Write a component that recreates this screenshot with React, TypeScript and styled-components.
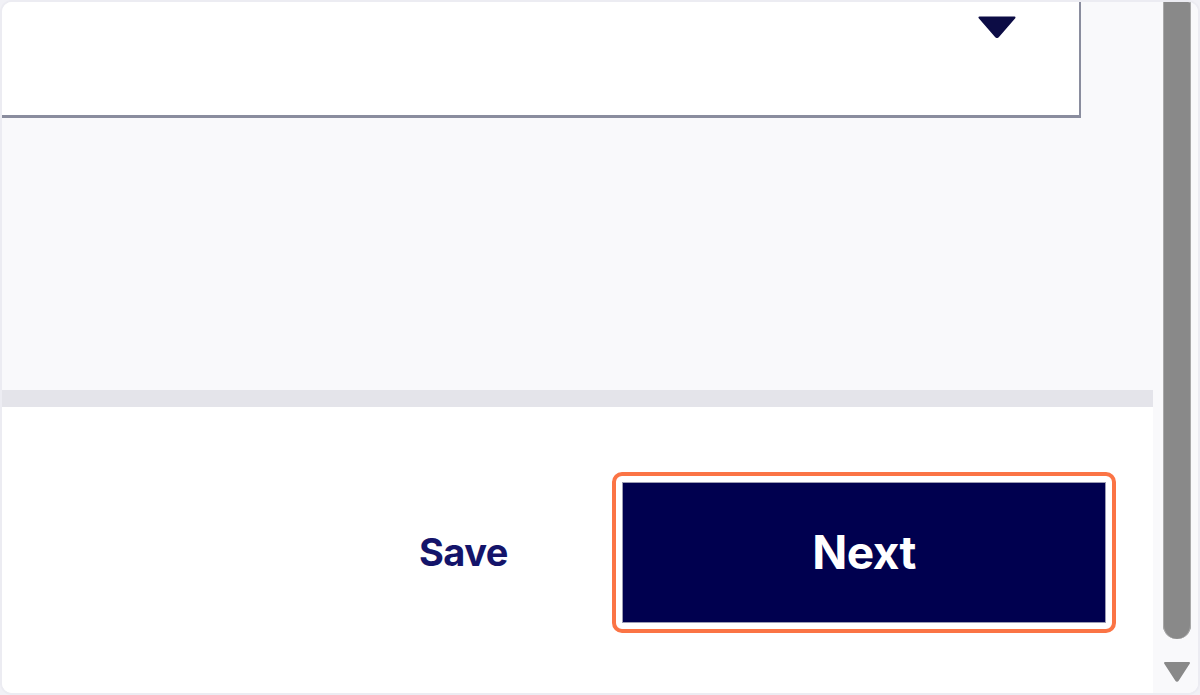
import React from "react";
import styled, { createGlobalStyle } from "styled-components";

const Global = createGlobalStyle`
  html, body { margin: 0; padding: 0; background: #f1f1f6; }
  body { font-family: "Inter", "Liberation Sans", sans-serif; }
  * { box-sizing: border-box; }
`;

const Frame = styled.div`
  width: 1200px;
  height: 695px;
  border: 2px solid #ececf2;
  border-radius: 12px;
  overflow: hidden;
  display: grid;
  grid-template-columns: 1fr 45px;
  background: #ffffff;
`;

const Main = styled.div`
  display: flex;
  flex-direction: column;
  min-width: 0;
`;

const Panel = styled.div`
  height: 388px;
  background: #f9f9fb;
  padding-right: 72px;
  display: flex;
  flex-direction: column;
`;

const Select = styled.div`
  height: 116px;
  background: #ffffff;
  border-right: 2px solid #8a8d9e;
  border-bottom: 3px solid #8a8d9e;
  display: flex;
  justify-content: flex-end;
  align-items: flex-start;
  padding: 14px 63px 0 0;
`;

const Divider = styled.div`
  height: 17px;
  background: #e4e4ea;
`;

const Footer = styled.div`
  flex: 1;
  background: #ffffff;
  display: flex;
  align-items: center;
  justify-content: flex-end;
  padding: 4px 37px 0 0;
`;

const SaveButton = styled.button`
  background: none;
  border: none;
  padding: 0;
  margin-right: 104px;
  font-family: "Inter", "Liberation Sans", sans-serif;
  font-weight: 700;
  font-size: 38px;
  letter-spacing: -0.5px;
  color: #14146a;
  cursor: pointer;
`;

const FocusRing = styled.div`
  border: 4px solid #fb7445;
  border-radius: 10px;
  padding: 6px;
  background: #ffffff;
`;

const NextButton = styled.button`
  width: 484px;
  height: 141px;
  background: #00004f;
  border: 1px solid #9c9cb3;
  color: #ffffff;
  font-family: "Inter", "Liberation Sans", sans-serif;
  font-weight: 700;
  font-size: 46px;
  letter-spacing: -0.5px;
  cursor: pointer;
  display: block;
`;

const Scrollbar = styled.div`
  background: #f9f9fb;
  display: flex;
  flex-direction: column;
  align-items: flex-start;
  padding-left: 10px;
`;

const Thumb = styled.div`
  width: 28px;
  height: 637px;
  background: #898989;
  border-radius: 0 0 14px 14px;
  box-shadow: inset 1px 0 0 #a9a9a9, inset -1px 0 0 #a9a9a9;
`;

const ArrowDown = styled.svg`
  margin-top: 22px;
  display: block;
`;

export default function App() {
  return (
    <>
      <Global />
      <Frame>
        <Main>
          <Panel>
            <Select>
              <svg width="38" height="22" viewBox="0 0 38 22">
                <path d="M1.5 1.5 L36.5 1.5 L20 20.5 Q19 21.5 18 20.5 Z" fill="#0c0c45" stroke="#0c0c45" strokeWidth="2" strokeLinejoin="round" />
              </svg>
            </Select>
          </Panel>
          <Divider />
          <Footer>
            <SaveButton>Save</SaveButton>
            <FocusRing>
              <NextButton>Next</NextButton>
            </FocusRing>
          </Footer>
        </Main>
        <Scrollbar>
          <Thumb />
          <ArrowDown width="28" height="21" viewBox="0 0 28 21">
            <path d="M2 2 L26 2 L15 19 Q14 20.5 13 19 Z" fill="#898989" stroke="#898989" strokeWidth="2" strokeLinejoin="round" />
          </ArrowDown>
        </Scrollbar>
      </Frame>
    </>
  );
}
